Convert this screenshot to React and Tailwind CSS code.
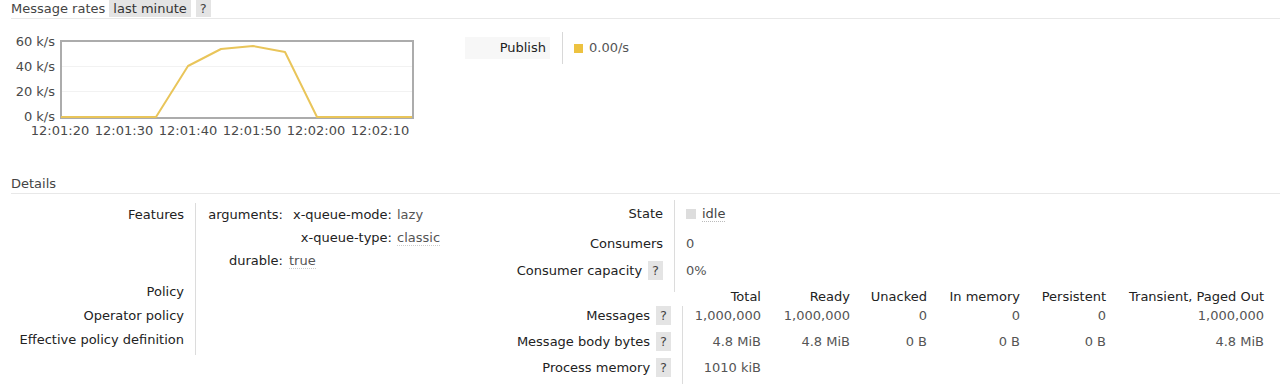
import React from "react";

const Q = ({ className = "" }) => (
  <span className={"inline-flex items-center justify-center h-[19px] px-[4px] bg-[#e4e4e4] text-[#444] ml-[6px] " + className}>?</span>
);

function Chart() {
  const yl = [
    ["60 k/s", 16],
    ["40 k/s", 41],
    ["20 k/s", 66],
    ["0 k/s", 91],
  ];
  const xl = ["12:01:20", "12:01:30", "12:01:40", "12:01:50", "12:02:00", "12:02:10"];
  return (
    <svg width="410" height="110" viewBox="0 0 410 110" className="block shrink-0">
      <line x1="50" y1="36.5" x2="401" y2="36.5" stroke="#f2f2f2" strokeWidth="1" />
      <line x1="50" y1="61.5" x2="401" y2="61.5" stroke="#f2f2f2" strokeWidth="1" />
      <rect x="50" y="11" width="352" height="77" fill="none" stroke="#acacac" strokeWidth="2" />
      <polyline
        points="50,87 145,87 177,36 210,19 242,16 274,22 306,87 401,87"
        fill="none"
        stroke="#e9c55a"
        strokeWidth="2"
        strokeLinejoin="round"
      />
      {yl.map(([t, y]) => (
        <text key={t} x="44" y={y} textAnchor="end" fontFamily="DejaVu Sans, sans-serif" fontSize="13" fill="#4a4a4a">
          {t}
        </text>
      ))}
      {xl.map((t, i) => (
        <text key={t} x={49 + i * 64} y="105" textAnchor="middle" fontFamily="DejaVu Sans, sans-serif" fontSize="13" fill="#4a4a4a">
          {t}
        </text>
      ))}
    </svg>
  );
}

const cols = [
  { h: "Total", w: "w-[79px]" },
  { h: "Ready", w: "w-[89px]" },
  { h: "Unacked", w: "w-[77px]" },
  { h: "In memory", w: "w-[93px]" },
  { h: "Persistent", w: "w-[86px]" },
  { h: "Transient, Paged Out", w: "w-[158px]" },
];

const msgRows = [
  { label: "Messages", vals: ["1,000,000", "1,000,000", "0", "0", "0", "1,000,000"] },
  { label: "Message body bytes", vals: ["4.8 MiB", "4.8 MiB", "0 B", "0 B", "0 B", "4.8 MiB"] },
  { label: "Process memory", vals: ["1010 kiB", "", "", "", "", ""] },
];

export default function App() {
  return (
    <div className="w-[1280px] h-[390px] overflow-hidden bg-white font-['DejaVu_Sans',sans-serif] text-[13px] text-[#222]">
      <div className="pl-[11px]">
        {/* Message rates header */}
        <div className="flex items-start h-[19px] border-b border-[#e8e8e8]">
          <span className="text-[#444] leading-[17px]">Message rates</span>
          <span className="ml-[4px] h-[17px] px-[4px] bg-[#e4e4e4] leading-[17px] text-[#333]">last minute</span>
          <span className="ml-[5px] h-[17px] px-[4px] bg-[#e4e4e4] leading-[17px] text-[#444]">?</span>
        </div>

        {/* Chart row */}
        <div className="flex items-start mt-[11px]">
          <Chart />
          <div className="flex items-start ml-[44px]">
            <div className="mt-[7px] w-[85px] h-[22px] bg-[#f7f7f7] flex items-center justify-end pr-[4px] text-[#222]">
              Publish
            </div>
            <div className="ml-[12px] mt-[2px] h-[32px] border-l border-[#d8d8d8] pl-[11px] flex items-center">
              <span className="w-[9px] h-[9px] bg-[#edc240]" />
              <span className="ml-[6px] text-[#555]">0.00/s</span>
            </div>
          </div>
        </div>

        {/* Details header */}
        <div className="mt-[35px] h-[19px] border-b border-[#e8e8e8] flex items-start">
          <span className="text-[#444] leading-[17px]">Details</span>
        </div>

        <div className="flex items-start mt-[6px]">
          {/* Left table */}
          <div className="w-[459px] mt-[3px] shrink-0">
            <div className="flex">
              <div className="w-[184px] pr-[11px] text-right shrink-0 text-[#222]">
                <div className="h-[77px] leading-[23px]">Features</div>
                <div className="h-[24px] leading-[24px]">Policy</div>
                <div className="h-[23px] leading-[23px]">Operator policy</div>
                <div className="h-[28px] leading-[25px]">Effective policy definition</div>
              </div>
              <div className="border-l border-[#dcdcdc] pl-[12px]">
                <div className="flex leading-[23px]">
                  <div className="w-[75px] text-right text-[#222]">arguments:</div>
                  <div className="ml-[6px]">
                    <div className="flex">
                      <div className="w-[103px] text-right text-[#222]">x-queue-mode:</div>
                      <div className="ml-[5px] text-[#555]">lazy</div>
                    </div>
                    <div className="flex">
                      <div className="w-[103px] text-right text-[#222]">x-queue-type:</div>
                      <div className="ml-[5px] text-[#555]">
                        <span className="border-b border-dotted border-[#ccc] leading-[15px] inline-block">classic</span>
                      </div>
                    </div>
                  </div>
                </div>
                <div className="flex leading-[23px]">
                  <div className="w-[75px] text-right text-[#222]">durable:</div>
                  <div className="ml-[6px] text-[#555]">
                    <span className="border-b border-dotted border-[#ccc] leading-[15px] inline-block">true</span>
                  </div>
                </div>
              </div>
            </div>
          </div>

          {/* Right tables */}
          <div>
            <div className="flex">
              <div className="w-[204px] pr-[11px] text-right shrink-0 text-[#222]">
                <div className="h-[28px] flex items-center justify-end">State</div>
                <div className="h-[32px] flex items-center justify-end">Consumers</div>
                <div className="h-[32px] flex items-start justify-end pt-[1px]">
                  Consumer capacity
                  <Q />
                </div>
              </div>
              <div className="border-l border-[#dcdcdc] pl-[11px] text-[#555]">
                <div className="h-[28px] flex items-center">
                  <span className="w-[10px] h-[10px] bg-[#dddddd]" />
                  <span className="ml-[6px] text-[#444] border-b border-dotted border-[#bbb] leading-[15px]">idle</span>
                </div>
                <div className="h-[32px] flex items-center">0</div>
                <div className="h-[32px] flex items-start pt-[1px] leading-[19px]">0%</div>
              </div>
            </div>

            {/* Messages table */}
            <div className="-mt-[4px]">
              <div className="flex h-[18px] items-center text-[#222]">
                <div className="w-[212px] shrink-0" />
                {cols.map((c) => (
                  <div key={c.h} className={c.w + " text-right shrink-0"}>
                    {c.h}
                  </div>
                ))}
              </div>
              {msgRows.map((r) => (
                <div key={r.label} className="flex h-[26px]">
                  <div className="w-[212px] shrink-0 pr-[11px] flex items-start justify-end text-[#222] leading-[19px]">
                    {r.label}
                    <Q />
                  </div>
                  {cols.map((c, i) => (
                    <div
                      key={c.h}
                      className={
                        c.w +
                        " text-right shrink-0 text-[#555] leading-[20px] " +
                        (i === 0 ? "border-l border-[#dcdcdc]" : "")
                      }
                    >
                      {r.vals[i]}
                    </div>
                  ))}
                </div>
              ))}
            </div>
          </div>
        </div>
      </div>
    </div>
  );
}
